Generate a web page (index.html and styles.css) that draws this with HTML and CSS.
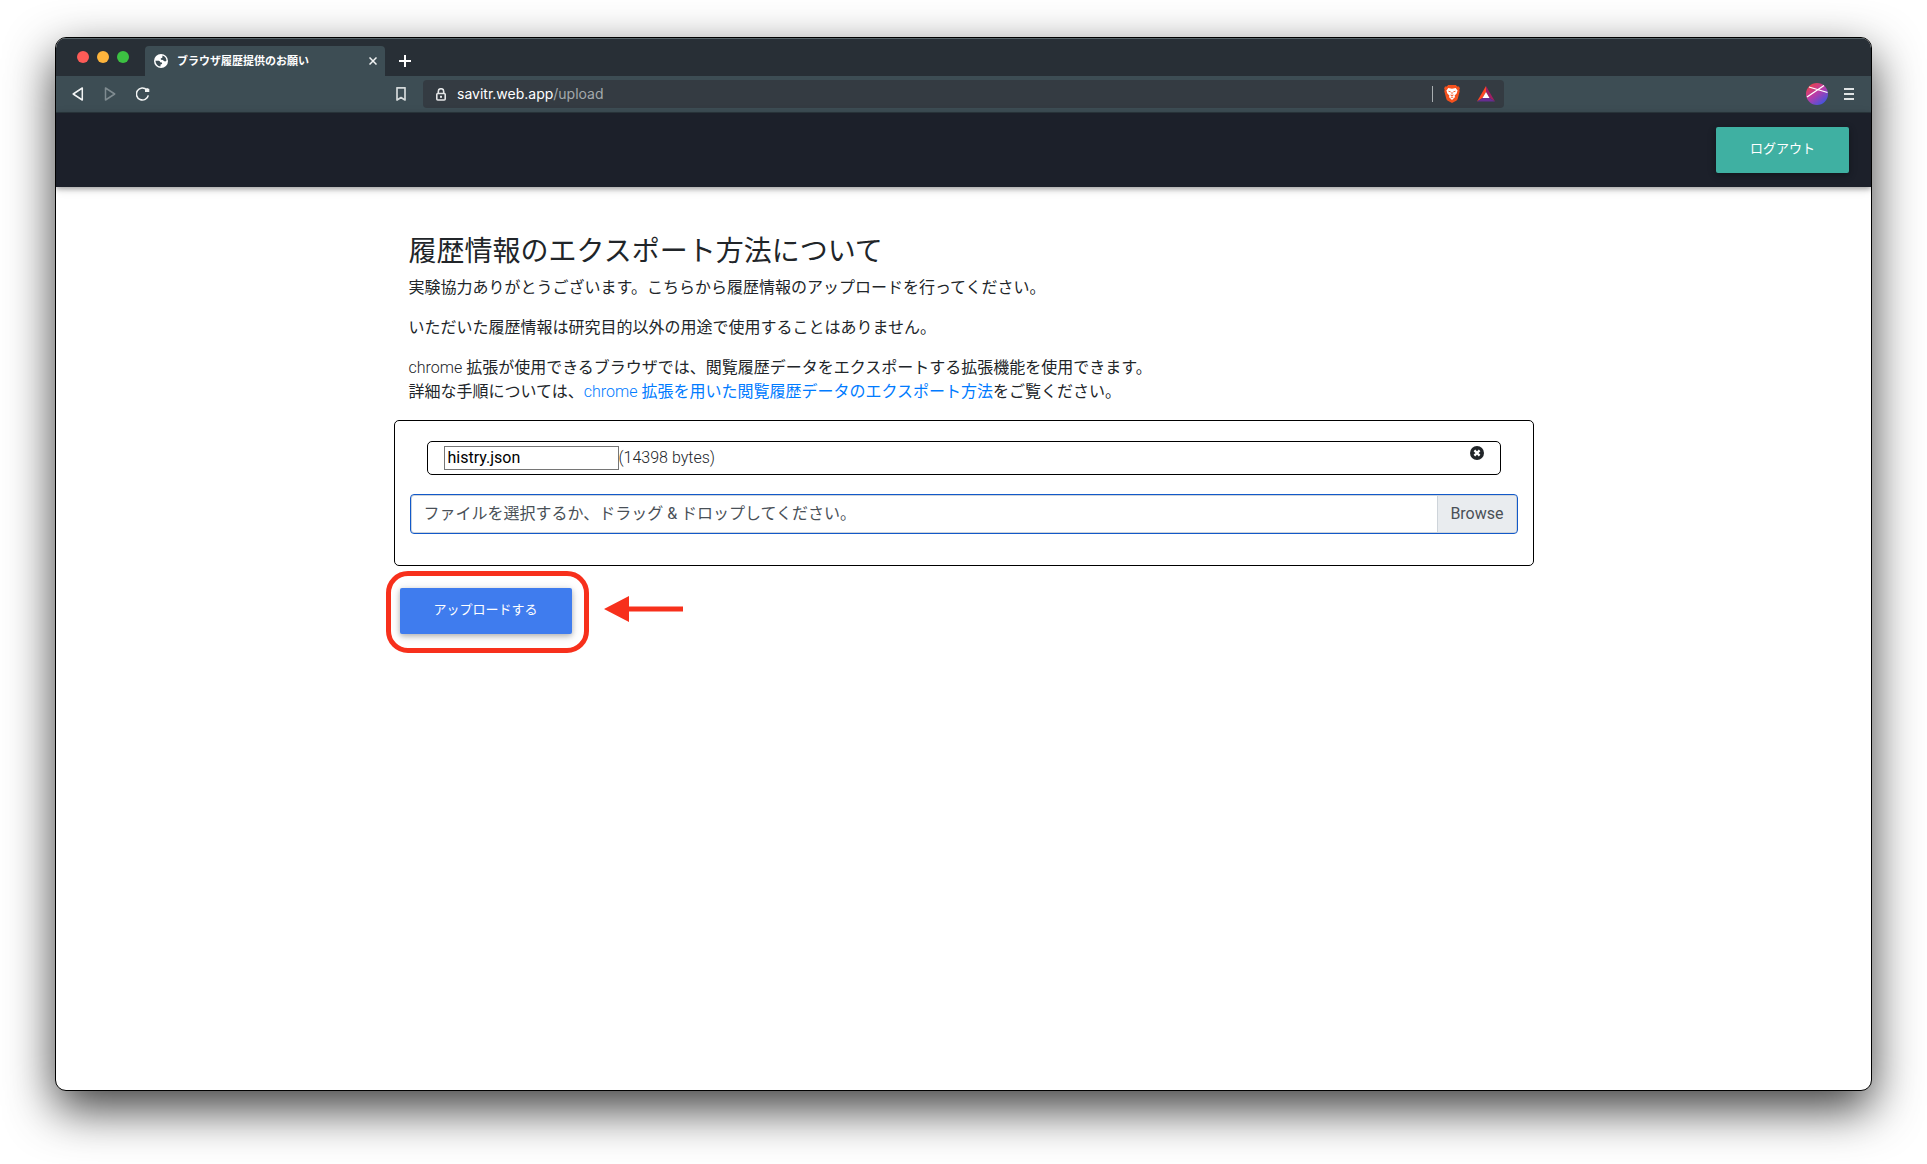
FILE: index.html
```html
<!DOCTYPE html>
<html lang="ja">
<head>
<meta charset="utf-8">
<meta name="viewport" content="width=device-width, initial-scale=1">
<title>ブラウザ履歴提供のお願い</title>
<link rel="stylesheet" href="styles.css">
</head>
<body>
<div class="window">
  <div class="tabstrip">
    <div class="lights">
      <button class="light light-close" aria-label="閉じる"></button>
      <button class="light light-min" aria-label="最小化"></button>
      <button class="light light-max" aria-label="最大化"></button>
    </div>
    <div class="tab">
      <svg class="globe" width="14" height="14" viewBox="0 0 14 14" aria-hidden="true"><circle cx="7" cy="7" r="7" fill="#fff"/><path d="M1.400 6.700 4.900 6.700Q6 7 6.200 8.300L7.700 8.600Q8.400 9 8 10L6.600 10.500 6.400 12.500Q2 12 1.400 6.700ZM8.500 1.600Q12.100 2.900 12.500 6.400L11.300 7.600 9.800 7 9 5.900 7 5.800 6.700 4.500 8.300 3.700Z" fill="#3d4d54"/></svg>
      <span class="tab-title">ブラウザ履歴提供のお願い</span>
      <button class="icon-button" aria-label="タブを閉じる"><svg width="8" height="8" viewBox="0 0 8 8"><path d="M.5.5l7 7M7.500.5l-7 7" stroke="#f1f3f3" stroke-width="1.500"/></svg></button>
    </div>
    <button class="icon-button new-tab" aria-label="新しいタブ"><svg width="12" height="12" viewBox="0 0 12 12"><path d="M6 0v12M0 6h12" stroke="#fff" stroke-width="2"/></svg></button>
  </div>

  <div class="toolbar">
    <div class="nav">
      <button class="icon-button" aria-label="戻る"><svg width="12" height="14" viewBox="0 0 12 14"><path d="M10.300 1v12L1.200 7Z" fill="none" stroke="#f1f3f3" stroke-width="1.500" stroke-linejoin="round"/></svg></button>
      <button class="icon-button" aria-label="進む" disabled><svg width="12" height="14" viewBox="0 0 12 14"><path d="M1.500 1v12l9.200-6Z" fill="none" stroke="#7f8b90" stroke-width="1.500" stroke-linejoin="round"/></svg></button>
      <button class="icon-button" aria-label="再読み込み"><svg width="14" height="14" viewBox="0 0 14 14"><path d="M12.300 8.300A6 6 0 1 1 10.700 2.800" fill="none" stroke="#f1f3f3" stroke-width="1.600"/><path d="M9 4.900V2.500l2-1.400 2.300 1v2.800Z" fill="#f1f3f3"/></svg></button>
      <button class="icon-button bookmark" aria-label="ブックマーク"><svg width="10" height="14" viewBox="0 0 10 14"><path d="M1 .8h8v12.200L5 10.500 1 13Z" fill="none" stroke="#d5dadb" stroke-width="1.700" stroke-linejoin="round"/></svg></button>
    </div>
    <div class="address">
      <svg width="10" height="13" viewBox="0 0 10 13" aria-hidden="true"><path d="M2.300 5.500V3.400a2.700 2.700 0 0 1 5.400 0v2.100" fill="none" stroke="#e3e5e6" stroke-width="1.600"/><rect x=".8" y="5.500" width="8.400" height="6.500" rx="1" fill="none" stroke="#e3e5e6" stroke-width="1.600"/><rect x="4" y="7.800" width="2" height="2" fill="#e3e5e6"/></svg>
      <span class="url">savitr.web.app<span class="path">/upload</span></span>
      <span class="divider"></span>
      <svg class="brave" width="16" height="18" viewBox="0 0 16 18" aria-hidden="true"><path d="M4.200 0h7.600l1.500 1.500 1.700-.1.900 2.200-.6 1.200.4 1.500-2 7.500c-.2.900-.8 1.500-1.500 2L8 18l-4.200-2.200c-.7-.5-1.300-1.100-1.500-2L.3 6.300.7 4.800.1 3.600 1 1.400l1.700.1Z" fill="#f4511e"/><path d="M4.300 3.100 8 3.700l3.700-.6 2 2.600-.8 1.200.1 1.100-2.500 2.800.6 1.200L8 15 4.900 12l.6-1.200L3 8l.1-1.100-.8-1.200Z" fill="#fff"/><path d="M4.500 6.200l2.200.7M11.500 6.200l-2.200.7M8 7v2.500M6.500 10 8 10.800 9.500 10M6.800 12.600 8 12l1.200.6" fill="none" stroke="#f4511e" stroke-width=".9"/></svg>
      <svg class="bat" width="18" height="16" viewBox="0 0 18 16" aria-hidden="true"><path d="M9 0 0 15.500 5.500 12 9 6Z" fill="#ff4724"/><path d="M9 0l9 15.500L12.500 12 9 6Z" fill="#9e1f63"/><path d="M0 15.500h18L12.500 12h-7Z" fill="#662d91"/><path d="M9 6l3.500 6h-7Z" fill="#fff"/></svg>
    </div>
    <div class="tools">
      <button class="icon-button" aria-label="プロフィール"><svg width="22" height="22" viewBox="0 0 22 22"><defs><linearGradient id="profile" x1=".15" y1=".1" x2=".8" y2=".95"><stop offset="0" stop-color="#e8424f"/><stop offset=".45" stop-color="#b93ba8"/><stop offset="1" stop-color="#3f55e0"/></linearGradient></defs><circle cx="11" cy="11" r="11" fill="url(#profile)"/><path d="M1 14 18 2.500M3 4l18.500 5.500" stroke="#fff" stroke-width="1.300"/></svg></button>
      <button class="icon-button" aria-label="メニュー"><svg width="10" height="12" viewBox="0 0 10 12"><path d="M0 1h10M0 6h10M0 11h10" stroke="#dfe3e4" stroke-width="2"/></svg></button>
    </div>
  </div>

  <header class="site-header">
    <button class="btn btn-logout">ログアウト</button>
  </header>

  <main class="content">
    <div class="intro">
      <h1>履歴情報のエクスポート方法について</h1>
      <p>実験協力ありがとうございます。こちらから履歴情報のアップロードを行ってください。</p>
      <p>いただいた履歴情報は研究目的以外の用途で使用することはありません。</p>
      <p><span class="latin">chrome</span> 拡張が使用できるブラウザでは、閲覧履歴データをエクスポートする拡張機能を使用できます。<br>詳細な手順については、<a href="#"><span class="latin">chrome</span> 拡張を用いた閲覧履歴データのエクスポート方法</a>をご覧ください。</p>
    </div>
    <form>
      <div class="dropzone">
        <div class="file-row">
          <input class="file-name" type="text" value="histry.json" aria-label="ファイル名">
          <span class="latin">(14398 bytes)</span>
          <button type="button" class="icon-button remove" aria-label="削除"><svg width="14" height="14" viewBox="0 0 14 14"><circle cx="7" cy="7" r="7" fill="#212529"/><path d="M4.400 4.400l5.200 5.200M9.600 4.400 4.400 9.600" stroke="#fff" stroke-width="2.200"/></svg></button>
        </div>
        <div class="picker">
          <input class="picker-input" type="file" id="file">
          <label class="picker-label" for="file"><span class="picker-text">ファイルを選択するか、ドラッグ &amp; ドロップしてください。</span><span class="picker-browse">Browse</span></label>
        </div>
      </div>
      <div class="submit">
        <button type="button" class="btn btn-upload">アップロードする</button>
        <span class="ring"></span>
        <svg class="arrow" width="79" height="26" viewBox="0 0 79 26" aria-hidden="true"><path d="M0 13 25 0v10.500h54v5H25V26Z" fill="#f7301c"/></svg>
      </div>
    </form>
  </main>
</div>
</body>
</html>
```
FILE: styles.css
```css
* {
  box-sizing: border-box;
}

body {
  display: flex;
  min-height: 100vh;
  margin: 0;
  padding: 37px 55px 73px;
  background: #fff;
  color: #212529;
  font: 400 16px/24px Roboto, "Noto Sans CJK JP", sans-serif;
}

button,
input {
  font-family: inherit;
}

.latin {
  font-weight: 300;
}

.window {
  display: flex;
  flex: 1;
  flex-direction: column;
  min-width: 0;
  overflow: hidden;
  border: 1px solid #000;
  border-radius: 11px;
  background: #fff;
  box-shadow: 0 18px 48px rgba(0, 0, 0, 0.76);
}

.icon-button {
  display: flex;
  flex: none;
  padding: 0;
  border: 0;
  background: none;
}

/* Browser chrome */
.tabstrip {
  display: flex;
  align-items: flex-end;
  height: 38px;
  padding-left: 21px;
  border-top: 1px solid #58656a;
  background: #282f36;
}

.lights {
  display: flex;
  gap: 8px;
  padding-bottom: 13px;
}

.light {
  width: 12px;
  height: 12px;
  padding: 0;
  border: 0;
  border-radius: 50%;
}

.light-close {
  background: #fc5b57;
}

.light-min {
  background: #fdb43c;
}

.light-max {
  background: #3cc142;
}

.tab {
  display: flex;
  align-items: center;
  width: 240px;
  height: 30px;
  margin-left: 16px;
  padding: 0 8px 0 9px;
  border-radius: 4px 4px 0 0;
  background: #3d4d54;
}

.tab-title {
  flex: 1;
  margin-left: 9px;
  padding-top: 1px;
  color: #fff;
  font-size: 11px;
  font-weight: 700;
  white-space: nowrap;
}

.new-tab {
  margin: 0 0 9px 14px;
}

.toolbar {
  display: grid;
  grid-template-columns: 367px 1fr 367px;
  align-items: center;
  height: 37px;
  border-bottom: 1px solid #2c383e;
  background: #3d4d54;
}

.nav,
.tools {
  display: flex;
  align-items: center;
  gap: 20px;
}

.nav {
  padding: 0 17px 0 16px;
}

.bookmark {
  margin-left: auto;
}

.address {
  display: flex;
  align-items: center;
  height: 28px;
  padding: 0 9px 0 13px;
  border-radius: 4px;
  background: #343b42;
}

.url {
  flex: 1;
  margin-left: 11px;
  color: #fff;
  font-family: Inter, sans-serif;
  font-size: 14px;
}

.path {
  color: #a3a9ac;
}

.divider {
  width: 1px;
  height: 16px;
  background: #a9aeb1;
}

.brave {
  margin-left: 11px;
}

.bat {
  margin-left: 17px;
}

.tools {
  justify-content: flex-end;
  gap: 16px;
  padding-right: 17px;
}

/* Page */
.site-header {
  display: flex;
  align-items: center;
  justify-content: flex-end;
  height: 74px;
  padding-right: 22px;
  background: #1c202a;
  box-shadow: 0 2px 5px rgba(0, 0, 0, 0.3), 0 2px 10px rgba(0, 0, 0, 0.12);
}

.btn {
  height: 46px;
  padding: 0 34px 5px;
  border: 0;
  border-radius: 2px;
  color: #fff;
  font-size: 13px;
  font-weight: 400;
  box-shadow: 0 2px 5px rgba(0, 0, 0, 0.2), 0 2px 10px rgba(0, 0, 0, 0.16);
}

.btn-logout {
  background: #3fb0a2;
}

.btn-upload {
  background: #3f7cee;
}

.content {
  width: 100%;
  max-width: 1140px;
  margin: 0 auto;
  padding-top: 48px;
}

.intro {
  padding: 0 15px;
}

h1 {
  margin: 0 0 7px;
  font-size: 28px;
  font-weight: 400;
  line-height: 34px;
}

p {
  margin: 0 0 16px;
}

a {
  color: #007bff;
  text-decoration: none;
}

.dropzone {
  padding: 20px 15px 31px;
  border: 1px solid #000;
  border-radius: 5px;
}

.file-row {
  display: flex;
  align-items: center;
  height: 34px;
  margin: 0 17px 19px;
  padding: 0 16px;
  border: 1px solid #000;
  border-radius: 5px;
}

.file-name {
  width: 175px;
  height: 24px;
  padding: 0 3px 2px;
  border: 1px solid #767676;
  border-radius: 0;
  color: #000;
  font-size: 16px;
  font-weight: 400;
}

.remove {
  align-self: flex-start;
  margin: 4px 0 0 auto;
}

.picker {
  position: relative;
}

.picker-input {
  position: absolute;
  inset: 0;
  width: 100%;
  opacity: 0;
}

.picker-label {
  display: flex;
  height: 40px;
  overflow: hidden;
  border: 1px solid #1259c9;
  border-radius: 4px;
  color: #495057;
  line-height: 36px;
  box-shadow: inset 0 0 0 1px #ced4da;
}

.picker-text {
  flex: 1;
  padding: 1px 0 0 13px;
}

.picker-browse {
  margin: 1px;
  padding: 0 12px;
  border-left: 1px solid #ced4da;
  background: #e9ecef;
}

.submit {
  position: relative;
  width: fit-content;
  margin: 22px 6px;
}

.submit .btn {
  display: block;
}

/* Callout drawn over the upload button */
.ring {
  position: absolute;
  inset: -17px -17px -19px -14px;
  border: 5px solid #f7301c;
  border-radius: 22px;
  pointer-events: none;
}

.arrow {
  position: absolute;
  top: 8px;
  left: calc(100% + 32px);
}
```
